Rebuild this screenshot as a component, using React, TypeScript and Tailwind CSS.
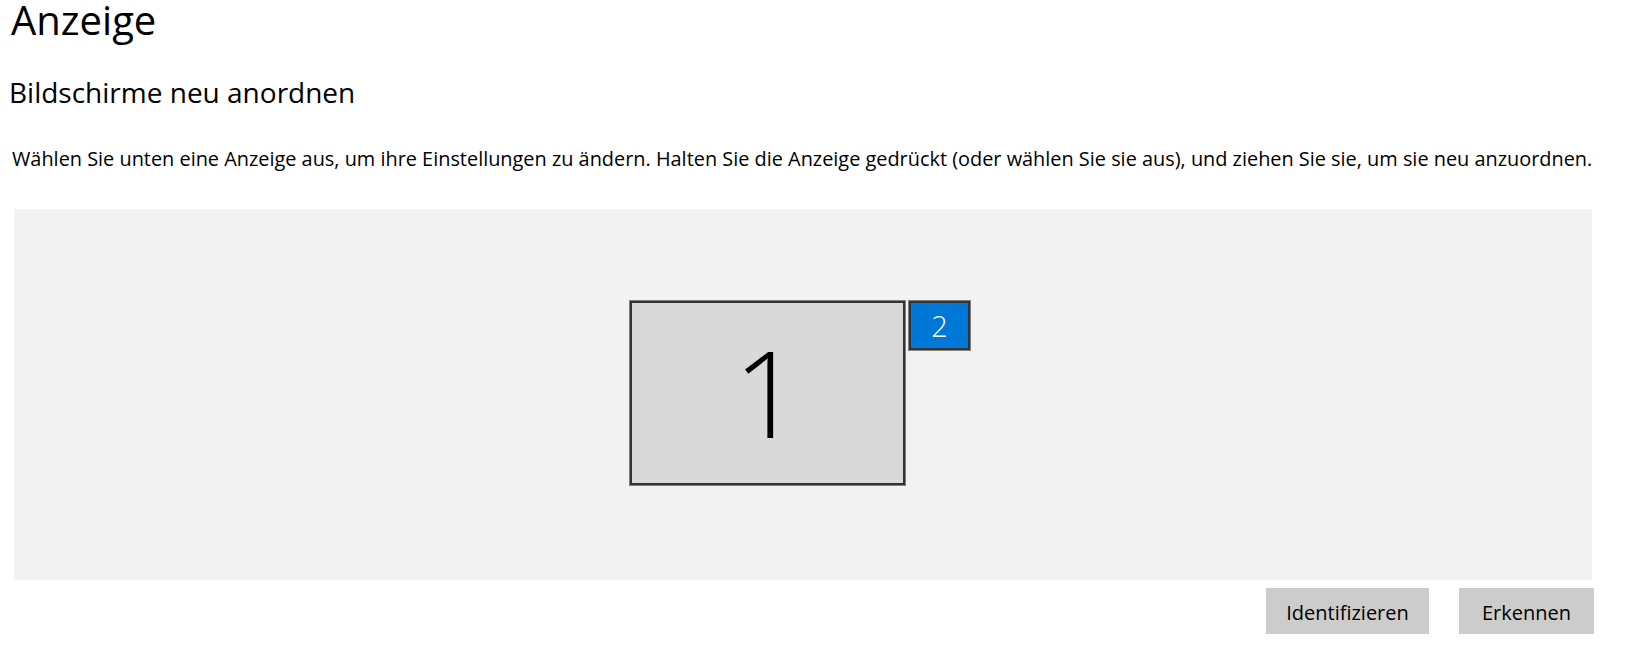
import React from "react";

const FONT = "font-['Open_Sans','Noto_Sans',sans-serif]";

function Monitor({ label, active }: { label: string; active?: boolean }) {
  if (active) {
    return (
      <div className="flex h-[49px] w-[61px] items-center justify-center border-2 border-[#333] bg-[#0078d7] outline outline-1 outline-[#808080]">
        <span className="text-[29px] font-light leading-none text-white">{label}</span>
      </div>
    );
  }
  return (
    <div className="flex h-[184px] w-[275px] items-center justify-center border-2 border-[#333] bg-[#d9d9d9] outline outline-1 outline-[#808080]">
      <span className="text-[119px] font-light leading-none text-black">{label}</span>
    </div>
  );
}

export default function App() {
  return (
    <div className={`min-h-[655px] w-[1646px] bg-white text-black ${FONT}`}>
      {/* Header */}
      <h1 className="pl-[11px] text-[40px] font-normal leading-[40px]">Anzeige</h1>
      <h2 className="mt-[34px] pl-[9px] text-[28px] font-normal leading-[36px]">
        Bildschirme neu anordnen
      </h2>
      <p className="mt-[36px] pl-[12px] text-[19.9px] leading-[26px]">
        Wählen Sie unten eine Anzeige aus, um ihre Einstellungen zu ändern. Halten Sie die Anzeige gedrückt (oder wählen Sie sie aus), und ziehen Sie sie, um sie neu anzuordnen.
      </p>

      {/* Display arrangement */}
      <div className="ml-[14px] mt-[37px] flex h-[371px] w-[1578px] items-center justify-center bg-[#f2f2f2]">
        <div className="flex items-start gap-[4px] pr-[6px] pb-[4px]">
          <Monitor label="1" />
          <Monitor label="2" active />
        </div>
      </div>

      {/* Buttons */}
      <div className="mt-[8px] flex w-[1594px] justify-end gap-[30px]">
        <button className="h-[46px] w-[163px] bg-[#cccccc] pt-[3px] text-[20px] text-black">Identifizieren</button>
        <button className="h-[46px] w-[135px] bg-[#cccccc] pt-[3px] text-[20px] text-black">Erkennen</button>
      </div>
    </div>
  );
}
